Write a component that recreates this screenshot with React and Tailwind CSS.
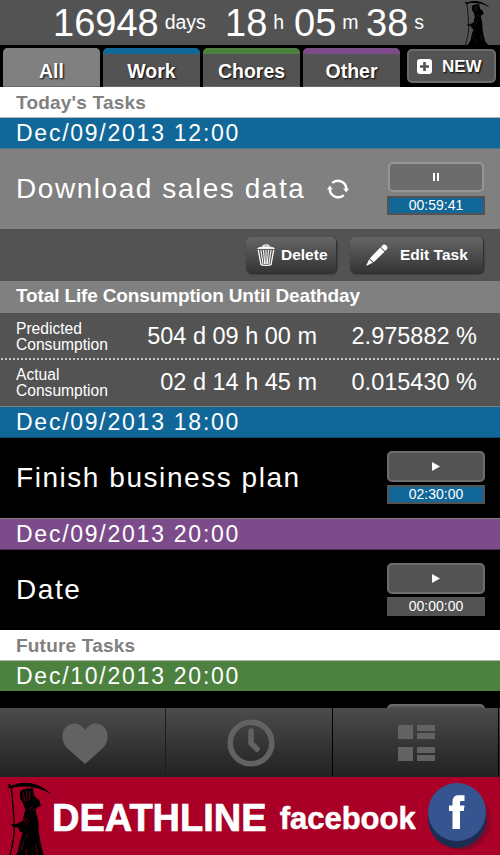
import React from 'react';

const Reaper = ({ className }) => (
    <svg viewBox="18 18 140 240" className={className} preserveAspectRatio="none">
        <path d="M22 29 L31 26 L33 33 C75 12 125 26 156 58 C122 36 78 31 40 37 L35 47 L31 38 L21 41 L28 35 Z" fill="#000" />
        <path d="M34 44 L37 62 C38 85 42 115 43 155 C45 190 36 216 26 258" fill="none" stroke="#000" strokeWidth="4" />
        <path
            d="M60 52 C63 44 70 42 77 43 L83 39 L88 42 L94 39 L101 40 L101 52 L106 66 L120 76 L124 94 L114 96 L108 104 L113 126 L117 144 L117 164 L123 204 L132 238 L148 258 L38 258 L53 232 L59 204 L67 180 L68 171 L60 170 L56 158 L36 154 L35 147 L48 148 L70 137 L72 120 L77 105 L69 83 L62 72 Z"
            fill="#000"
        />
        <path
            d="M70 52 L76 78 M80 48 L82 78 M91 48 L90 76 M89 104 L99 94 M94 110 L104 100 M83 128 L72 143 M89 135 L78 150 M72 198 L64 226 M84 176 L79 186 M80 222 L78 246 M109 206 L114 238"
            fill="none"
            stroke="currentColor"
            strokeWidth="1.8"
        />
    </svg>
);

const TrashIcon = () => (
    <svg viewBox="0 0 18 22" width="18" height="22" fill="none" stroke="#fff">
        <path d="M6 2.4 C6 .3 12 .3 12 2.4" strokeWidth="1.2" />
        <path d="M.6 4.6 C3 2.1 15 2.1 17.4 4.6 Z" fill="#fff" strokeWidth=".9" />
        <path d="M1.3 6 L4 20.6 C6 21.5 12 21.5 14 20.6 L16.7 6" strokeWidth="1.3" />
        <path d="M3.9 6 L6 20 M6.5 6 L7.7 20 M9 6 V20 M11.5 6 L10.3 20 M14.1 6 L12 20" strokeWidth="1.1" />
    </svg>
);

const PencilIcon = () => (
    <svg viewBox="0 0 22 22" width="22" height="22" fill="#fff">
        <path d="M0 22 L3.2 15.2 L6.8 18.8 Z" />
        <path d="M3.7 14.4 L14.3 3.6 L18.5 7.8 L7.7 18.2 Z" />
        <path d="M15 2.9 L17 .9 C18.8 -.8 22.8 3 21.1 5 L19.2 7.1 Z" />
    </svg>
);

const RepeatIcon = () => (
    <svg viewBox="0 0 22 20" width="22" height="20">
        <path d="M5.2 3.9 A8.5 8.5 0 0 1 19.3 9.8 M16.8 16.1 A8.5 8.5 0 0 1 2.7 10.2" fill="none" stroke="#fff" strokeWidth="2.4" />
        <path d="M16.2 9.4 H22 L19.2 13.4 Z M0 10.6 H5.8 L2.8 6.6 Z" fill="#fff" />
    </svg>
);

const Unit = ({ value, label, className }) => (
    <div className={`flex items-baseline ${className}`}>
        <span className="text-[38px] leading-[45px]">{value}</span>
        <span className="relative -top-[7px] ml-[6px] text-[19.5px] leading-5">{label}</span>
    </div>
);

const Tab = ({ label, active, bar }) => (
    <div className={`h-[39px] w-[97px] overflow-hidden rounded-t-[5px] border-b border-[#6a6a6a] ${active ? 'bg-[#808080]' : 'bg-[#535353]'}`}>
        <div className={`h-[6px] ${bar}`} />
        <div className="pt-[5px] text-center text-[19.5px] leading-[24px] font-bold [text-shadow:1px_1px_2px_#000]">{label}</div>
    </div>
);

const SectionTitle = ({ children }) => (
    <div className="h-[31px] shrink-0 border-b border-[#b5b5b5] bg-white pl-4 text-[19px] leading-[31px] font-bold tracking-[0.2px] text-[#808080]">{children}</div>
);

const DateBar = ({ children, color }) => (
    <div className={`shrink-0 border-b pl-4 text-[23px] leading-[31px] tracking-[1.75px] ${color}`}>{children}</div>
);

const Task = ({ title, time, running, repeat, timed }) => (
    <div className={`flex h-[80px] shrink-0 items-center pl-4 ${running ? 'bg-[#808080]' : 'bg-black'}`}>
        <span className="text-[28px] tracking-[1.55px]">{title}</span>
        {repeat && <span className="ml-[22px]"><RepeatIcon /></span>}
        <div className="mr-[15px] ml-auto w-[98px] self-start pt-[13px]">
            <div className={`flex items-center justify-center rounded-[5px] border-2 ${running ? 'mx-px mb-[4px] h-[30px] border-[#969696] bg-[#6c6c6c]' : 'mb-[3px] h-[31px] border-[#6c6c6c] bg-[#535353]'}`}>
                {running ? (
                    <svg width="6" height="8"><path d="M0 0H2V8H0ZM4 0H6V8H4Z" fill="#fff" /></svg>
                ) : (
                    <svg width="8" height="9"><path d="M0 0L8 4.5L0 9Z" fill="#fff" /></svg>
                )}
            </div>
            <div className={`flex h-[19px] items-center justify-center border-2 border-[#535353] text-[14px] ${timed ? 'bg-[#116798]' : 'bg-[#535353]'}`}>{time}</div>
        </div>
    </div>
);

const ActionButton = ({ className, children }) => (
    <div className={`flex h-[36px] items-center rounded-[5px] bg-linear-to-b from-[#666] to-[#343434] text-[15.5px] font-bold shadow-[1px_1px_2px_#222] ${className}`}>{children}</div>
);

const StatRow = ({ label, span, percent, className }) => (
    <div className={`flex h-[47px] shrink-0 items-center bg-[#535353] pr-[23px] pl-4 ${className}`}>
        <div className="w-[100px] text-[15.6px] leading-[16px]">{label}<br />Consumption</div>
        <div className="w-[201px] text-right text-[23.5px]">{span}</div>
        <div className="ml-auto text-[23.5px]">{percent}</div>
    </div>
);

const App = () => {
    return (
        <div className="flex h-[855px] w-[500px] flex-col overflow-hidden bg-black font-['Liberation_Sans',Arial,sans-serif] text-white">
            <header className="flex h-[45px] shrink-0 bg-[#535353] pl-[53px]">
                <Unit value="16948" label="days" className="w-[172px] pt-px" />
                <Unit value="18" label="h" className="w-[69px] pt-px" />
                <Unit value="05" label="m" className="w-[72px] pt-px" />
                <Unit value="38" label="s" className="w-[98px] pt-px" />
                <Reaper className="h-[45px] w-[26px] text-[#404040]" />
            </header>

            <nav className="flex h-[42px] shrink-0 gap-[3px] bg-black pt-[3px] pl-[3px]">
                <Tab label="All" active bar="bg-[#808080]" />
                <Tab label="Work" bar="bg-[#116798]" />
                <Tab label="Chores" bar="bg-[#4d813f]" />
                <Tab label="Other" bar="bg-[#7c4c8a]" />
                <div className="mt-px ml-[4px] flex h-[34px] w-[89px] items-center rounded-[5px] border-2 border-[#6c6c6c] bg-[#535353] pl-[8px]">
                    <svg width="15" height="15">
                        <rect width="15" height="15" rx="3" fill="#fff" />
                        <path d="M7.5 3V12M3 7.5H12" stroke="#535353" strokeWidth="2.6" />
                    </svg>
                    <span className="ml-[10px] pt-px text-[17px] font-bold [text-shadow:1px_1px_2px_#000]">NEW</span>
                </div>
            </nav>

            <main className="flex h-[621px] shrink-0 flex-col overflow-hidden">
                <SectionTitle>Today's Tasks</SectionTitle>
                <DateBar color="h-[31px] border-[#477992] bg-[#116798]">Dec/09/2013 12:00</DateBar>
                <Task title="Download sales data" time="00:59:41" running repeat timed />
                <div className="flex h-[52px] shrink-0 justify-end bg-[#535353] pt-[8px] pr-[17px]">
                    <ActionButton className="mr-[14px] w-[90px] pl-[11px]">
                        <TrashIcon />
                        <span className="ml-[6px]">Delete</span>
                    </ActionButton>
                    <ActionButton className="w-[133px] pl-[16px]">
                        <PencilIcon />
                        <span className="ml-[12px]">Edit Task</span>
                    </ActionButton>
                </div>
                <div className="h-[32px] shrink-0 bg-[#808080] pl-4 text-[19px] leading-[30px] font-bold tracking-[-0.14px]">Total Life Consumption Until Deathday</div>
                <StatRow label="Predicted" span="504 d 09 h 00 m" percent="2.975882 %" className="bg-[radial-gradient(circle,#c4c4c4_0.8px,transparent_1.1px)] bg-[length:4px_2px] bg-[position:0_100%] bg-repeat-x" />
                <StatRow label="Actual" span="02 d 14 h 45 m" percent="0.015430 %" className="border-b border-[#808080]" />
                <DateBar color="h-[31px] border-[#0b4a6d] bg-[#116798]">Dec/09/2013 18:00</DateBar>
                <Task title="Finish business plan" time="02:30:00" timed />
                <DateBar color="h-[32px] border-t border-t-[#808080] border-b-[#4b2d54] bg-[#7c4c8a]">Dec/09/2013 20:00</DateBar>
                <Task title="Date" time="00:00:00" />
                <SectionTitle>Future Tasks</SectionTitle>
                <DateBar color="h-[30px] border-[#4d813f] bg-[#4d813f]">Dec/10/2013 20:00</DateBar>
                <Task title="" time="" />
            </main>

            <nav className="flex h-[69px] shrink-0 border-b border-[#222] bg-linear-to-b from-[#4c4c4c] to-[#222]">
                <div className="flex w-[166px] items-center justify-center border-r border-[#1d1d1d] pt-[2px] pl-[4px]">
                    <svg width="46" height="41" viewBox="0 0 46 41">
                        <path d="M23 41 L5 25 C-1 19 -1 9 4 4 C10 -2 19 0 23 7 C27 0 36 -2 42 4 C47 9 47 19 41 25 Z" fill="#626262" />
                    </svg>
                </div>
                <div className="flex w-[167px] items-center justify-center border-r border-black pt-px pl-[3px]">
                    <svg width="48" height="48" viewBox="0 0 48 48" fill="none" stroke="#626262">
                        <circle cx="24" cy="24" r="20.8" strokeWidth="5.6" />
                        <path d="M24 12 V24 L30 30" strokeWidth="5.5" strokeLinecap="round" />
                    </svg>
                </div>
                <div className="flex w-[166px] items-center justify-center border-r border-black pt-[2px] pl-[2px]">
                    <svg width="37" height="37" viewBox="0 0 37 37" fill="#626262">
                        <path d="M0 0H15V14H0ZM19 0H37V6H19ZM19 8H37V14H19ZM0 22H15V36H0ZM19 22H37V28H19ZM19 30H37V36H19Z" />
                    </svg>
                </div>
            </nav>

            <footer className="flex h-[78px] shrink-0 items-start overflow-hidden bg-[#aa0027] pl-[6px]">
                <Reaper className="mt-[4px] h-[80px] w-[46px] shrink-0 text-[#aa0027]" />
                <div className="flex items-baseline pt-[18px] font-bold whitespace-nowrap">
                    <span className="text-[38px] leading-[46px] [-webkit-text-stroke:0.7px_#fff]">DEATHLINE</span>
                    <span className="relative -top-[2px] ml-[13px] text-[31px] leading-[40px] [-webkit-text-stroke:0.5px_#fff]">facebook</span>
                </div>
                <svg width="66" height="70" viewBox="0 0 66 70" className="mt-[5px] ml-[11px] shrink-0">
                    <circle cx="34" cy="38" r="30" fill="#850527" />
                    <path d="M1 30 H59 V37 A29 29 0 0 1 1 37 Z" fill="#1d2d51" />
                    <circle cx="30" cy="30" r="29" fill="#365590" />
                    <path d="M25.5 47 V29 H22 V23.5 H25.5 V20 C25.5 15 28 13.2 32 13.2 H37.5 V19 H34.8 C33.3 19 33 19.6 33 21 V23.5 H37.5 L36.8 29 H33 V47 Z" fill="#fff" />
                </svg>
            </footer>
        </div>
    );
};

export default App;
